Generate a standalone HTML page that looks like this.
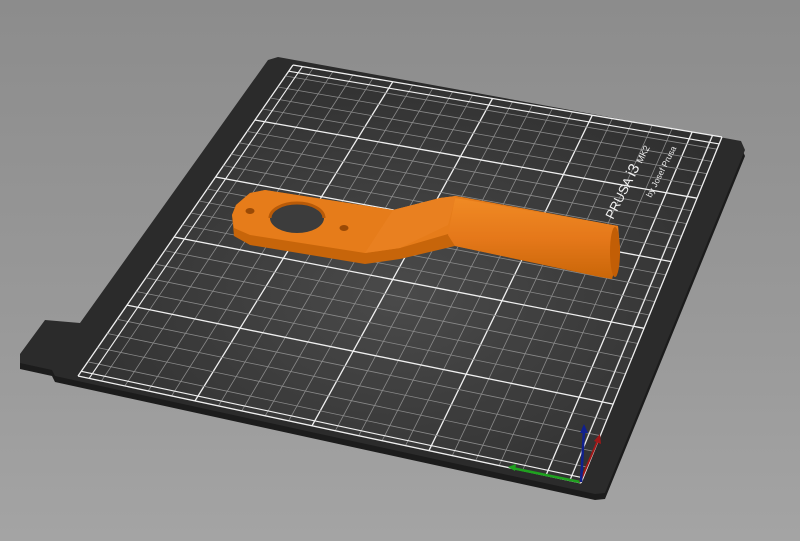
<!DOCTYPE html>
<html><head><meta charset="utf-8"><style>
html,body{margin:0;padding:0;width:800px;height:541px;overflow:hidden;}
body{background:linear-gradient(180deg,#8c8c8c 0%,#999 60%,#a4a4a4 100%);}
svg{display:block}
</style></head><body>
<svg id="s" width="800" height="541" viewBox="0 0 800 541" xmlns="http://www.w3.org/2000/svg">
<defs>
<radialGradient id="bg" cx="0.5" cy="0.55" r="0.6">
<stop offset="0" stop-color="#4a4a4a"/><stop offset="1" stop-color="#2e2e2e"/>
</radialGradient>
<linearGradient id="bar" x1="0" y1="0" x2="0" y2="1">
<stop offset="0" stop-color="#f08a24"/><stop offset="0.5" stop-color="#e5781a"/><stop offset="1" stop-color="#c96608"/>
</linearGradient>
</defs>
<!-- bed side -->
<polygon points="268,66 278,63 741,147 745,156 605,499 595,500 55,382 52,376 20,369 20,360 45,326 80,329" fill="#1c1c1c"/>
<!-- bed top -->
<polygon points="268,60 278,57 741,141 745,150 605,493 595,494 55,376 52,370 20,363 20,354 45,320 80,323" fill="#2b2b2b"/>
<polygon points="293,65 722,137 581,483 78,376" fill="url(#bg)"/>
<g id="grid"></g>
<!-- text -->
<text x="0" y="0" transform="translate(613,220) rotate(-63)" fill="#f4f4f4" font-family="Liberation Sans, sans-serif" font-size="13">PRUSA <tspan font-size="15">i3</tspan> <tspan font-size="9">MK2</tspan></text>
<text x="0" y="0" transform="translate(651,198) rotate(-63)" fill="#e8e8e8" font-family="Liberation Sans, sans-serif" font-size="8.5">by Josef Prusa</text>
<!-- part -->
<polygon points="236,205 250,193 265,190 393,210 440,198 456,196 618,226 620,250 612,279 600,277 455,246 400,259 365,264 250,245 234,236 232,215" fill="#c7650a"/>
<polygon points="236,205 250,193 265,190 393,210 440,198 456,196 618,226 617,250 455,232 400,248 365,253 250,235 234,228 232,215" fill="#e67c1a"/>
<polygon points="455,198 618,226 620,250 612,279 455,246 448,235" fill="url(#bar)"/>
<polygon points="393,210 440,198 456,196 448,225 400,248 365,253" fill="#e98020"/>
<ellipse cx="615" cy="252" rx="5" ry="25" fill="#c25e06"/>
<ellipse cx="297" cy="218" rx="27" ry="15" fill="#3c3c3c"/>
<path d="M270,218 a27,15 0 0 1 54,0" fill="none" stroke="#b85a08" stroke-width="3"/>
<ellipse cx="250" cy="211" rx="4.5" ry="3" fill="#9a4a06"/>
<ellipse cx="344" cy="228" rx="4.5" ry="3" fill="#9a4a06"/>
<!-- axes -->
<line x1="580" y1="482" x2="512" y2="468" stroke="#1fa21f" stroke-width="2.5"/>
<polygon points="508,467 516,464 515,471" fill="#1fa21f"/>
<line x1="580" y1="482" x2="598" y2="440" stroke="#a01818" stroke-width="2"/>
<polygon points="600,434 601,444 594,441" fill="#a01818"/>
<line x1="581" y1="482" x2="584" y2="430" stroke="#10208e" stroke-width="2.5"/>
<polygon points="584,424 588,433 580,433" fill="#10208e"/>
</svg>
<script>
(function(){
var TL=[293,65],TR=[722,137],BR=[581,483],BL=[78,376];
function P(u,v){var t=[TL[0]+(TR[0]-TL[0])*u,TL[1]+(TR[1]-TL[1])*u],b=[BL[0]+(BR[0]-BL[0])*u,BL[1]+(BR[1]-BL[1])*u];return [t[0]+(b[0]-t[0])*v,t[1]+(b[1]-t[1])*v];}
var g=document.getElementById('grid'),h='';
function L(a,b,c,w){h+='<line x1="'+a[0].toFixed(1)+'" y1="'+a[1].toFixed(1)+'" x2="'+b[0].toFixed(1)+'" y2="'+b[1].toFixed(1)+'" stroke="'+c+'" stroke-width="'+w+'"/>';}
var cu=100/430;
for(var i=0;i<=25;i++){var u=i*cu/5;if(u>1.001)break;var maj=(i%5==0);L(P(u,0),P(u,1),maj?'#f0f0f0':'#8a8a8a',maj?1.3:0.8);}
var F=[0,.228,.447,.64,.823,1];
for(var j=0;j<=25;j++){var k=Math.floor(j/5),r=(j%5)/5;var f=(k>=5)?1:F[k]+(F[k+1]-F[k])*r;var v=1-f,maj=(j%5==0);L(P(0,v),P(1,v),maj?'#f0f0f0':'#8a8a8a',maj?1.3:0.8);}
L(P(1,0),P(1,1),'#f0f0f0',1.3);
var d=0.022;L(P(d,0),P(d,1),'#f0f0f0',1.1);L(P(1-d,0),P(1-d,1),'#f0f0f0',1.1);
L(P(0,0.02),P(1,0.02),'#f0f0f0',1.1);L(P(0,0.985),P(1,0.985),'#f0f0f0',1.1);
g.innerHTML=h;
})();
</script>
</body></html>
